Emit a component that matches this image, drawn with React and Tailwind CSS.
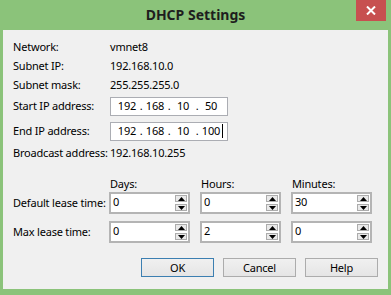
import React from 'react';

function IpField({ parts, cursor }) {
  return (
    <div className="flex h-[19px] w-[118px] items-center border border-[#abadb3] bg-white pl-[5px] text-black">
      {parts.map((p, i) => (
        <React.Fragment key={i}>
          {i > 0 && <span className="w-[6px] text-center">.</span>}
          <span className="relative w-[22px] text-center">
            {p}
            {cursor && i === parts.length - 1 && (
              <span className="absolute right-[-1px] top-[1px] h-[14px] w-px bg-black" />
            )}
          </span>
        </React.Fragment>
      ))}
    </div>
  );
}

function Spinner({ value }) {
  return (
    <div className="flex h-[22px] w-[81px] items-stretch border-2 border-[#b4b4b4] bg-white">
      <div className="flex-1 pl-[2px] leading-[16px] text-black">{value}</div>
      <div className="flex w-[13px] flex-col gap-[2px] py-px pr-px">
        <div className="flex flex-1 items-center justify-center border border-[#acacac] bg-[#e9e9e9]">
          <svg width="7" height="4" viewBox="0 0 7 4"><path d="M0 4L3.5 0L7 4Z" fill="#000" /></svg>
        </div>
        <div className="flex flex-1 items-center justify-center border border-[#acacac] bg-[#e9e9e9]">
          <svg width="7" height="4" viewBox="0 0 7 4"><path d="M0 0L3.5 4L7 0Z" fill="#000" /></svg>
        </div>
      </div>
    </div>
  );
}

function Row({ label, children, className = '' }) {
  return (
    <div className={`flex h-[19px] items-center ${className}`}>
      <div className="w-[97px] shrink-0">{label}</div>
      {children}
    </div>
  );
}

export default function App() {
  return (
    <div className="flex h-[295px] w-[391px] flex-col whitespace-nowrap bg-[#8bc37a] px-[3px] pb-[6px] font-['Segoe_UI','Noto_Sans',sans-serif] text-[11px] tracking-[-0.2px] text-[#000]">
      {/* title bar */}
      <div className="relative flex h-[30px] shrink-0 items-center justify-center">
        <span className="pb-[1px] text-[14px] font-bold tracking-normal text-[#1e1e1e]">DHCP Settings</span>
        <div className="absolute right-[2px] top-0 flex h-[21px] w-[30px] items-center justify-center bg-[#c75050]">
          <svg width="10" height="9" viewBox="0 0 10 9">
            <path d="M1 0.5L9 8.5M9 0.5L1 8.5" stroke="#fff" strokeWidth="2" />
          </svg>
        </div>
      </div>

      {/* client area */}
      <div className="flex flex-1 flex-col bg-[#f0f0f0] pl-[10px] pr-[10px] pt-[8px]">
        <Row label="Network:"><span>vmnet8</span></Row>
        <Row label="Subnet IP:"><span>192.168.10.0</span></Row>
        <Row label="Subnet mask:"><span>255.255.255.0</span></Row>
        <Row label="Start IP address:" className="mt-[2px]">
          <IpField parts={['192', '168', '10', '50']} />
        </Row>
        <Row label="End IP address:" className="mt-[6px]">
          <IpField parts={['192', '168', '10', '100']} cursor />
        </Row>
        <Row label="Broadcast address:" className="mt-[3px]">
          <span>192.168.10.255</span>
        </Row>

        <div className="mt-[13px] flex h-[16px] items-center pl-[97px]">
          <div className="w-[91px]">Days:</div>
          <div className="w-[91px]">Hours:</div>
          <div>Minutes:</div>
        </div>
        <div className="flex h-[22px] items-center">
          <div className="w-[96px] shrink-0">Default lease time:</div>
          <div className="flex gap-[10px]">
            <Spinner value="0" />
            <Spinner value="0" />
            <Spinner value="30" />
          </div>
        </div>
        <div className="mt-[7px] flex h-[22px] items-center">
          <div className="w-[96px] shrink-0">Max lease time:</div>
          <div className="flex gap-[10px]">
            <Spinner value="0" />
            <Spinner value="2" />
            <Spinner value="0" />
          </div>
        </div>

        <div className="mt-[15px] flex justify-end gap-[9px]">
          <button className="h-[19px] w-[73px] border border-[#3c7fb1] bg-gradient-to-b from-[#f0f0f0] to-[#e5e5e5] text-[11px] leading-none">OK</button>
          <button className="h-[19px] w-[73px] border border-[#acacac] bg-gradient-to-b from-[#f0f0f0] to-[#e5e5e5] text-[11px] leading-none">Cancel</button>
          <button className="h-[19px] w-[73px] border border-[#acacac] bg-gradient-to-b from-[#f0f0f0] to-[#e5e5e5] text-[11px] leading-none">Help</button>
        </div>
      </div>
    </div>
  );
}
